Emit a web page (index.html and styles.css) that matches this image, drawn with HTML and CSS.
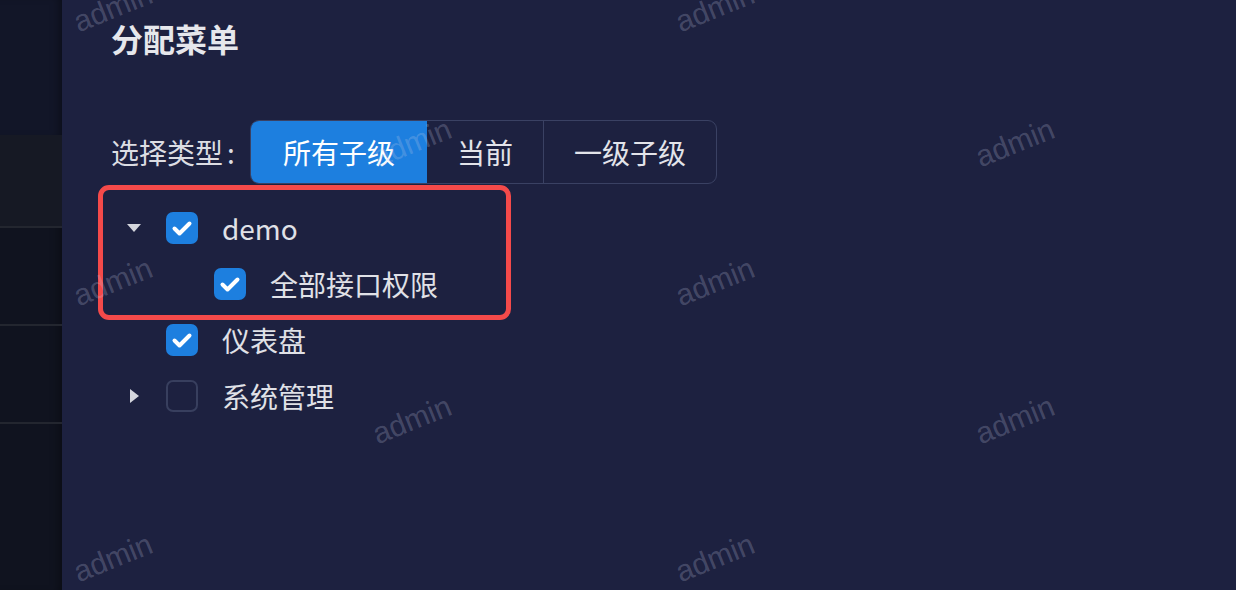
FILE: index.html
```html
<!DOCTYPE html>
<html lang="zh-CN">
<head>
<meta charset="utf-8">
<title>分配菜单</title>
<link rel="stylesheet" href="styles.css">
</head>
<body>
<div class="app">
  <aside class="sidebar">
    <div class="side-top"></div>
    <div class="side-item side-item-active"></div>
    <div class="side-item"></div>
    <div class="side-item"></div>
    <div class="side-rest"></div>
  </aside>
  <main class="panel">
    <h2 class="title">分配菜单</h2>
    <div class="type-row">
      <span class="type-label">选择类型<span class="colon">:</span></span>
      <div class="seg">
        <button class="seg-btn seg-btn-active">所有子级</button>
        <button class="seg-btn">当前</button>
        <button class="seg-btn">一级子级</button>
      </div>
    </div>
    <div class="tree">
      <div class="tree-row">
        <span class="caret"><svg width="14" height="8" viewBox="0 0 14 8"><polygon points="0,0 14,0 7,8" fill="#d4d6dd"/></svg></span>
        <span class="checkbox checked"><svg width="32" height="32" viewBox="0 0 32 32"><path d="M8.5 16.5l5 5L23.5 11.5" fill="none" stroke="#fff" stroke-width="4" stroke-linecap="round" stroke-linejoin="round"/></svg></span>
        <span class="node-label">demo</span>
      </div>
      <div class="tree-row level-1">
        <span class="caret"></span>
        <span class="checkbox checked"><svg width="32" height="32" viewBox="0 0 32 32"><path d="M8.5 16.5l5 5L23.5 11.5" fill="none" stroke="#fff" stroke-width="4" stroke-linecap="round" stroke-linejoin="round"/></svg></span>
        <span class="node-label">全部接口权限</span>
      </div>
      <div class="tree-row">
        <span class="caret"></span>
        <span class="checkbox checked"><svg width="32" height="32" viewBox="0 0 32 32"><path d="M8.5 16.5l5 5L23.5 11.5" fill="none" stroke="#fff" stroke-width="4" stroke-linecap="round" stroke-linejoin="round"/></svg></span>
        <span class="node-label">仪表盘</span>
      </div>
      <div class="tree-row">
        <span class="caret"><svg width="9" height="14" viewBox="0 0 9 14"><polygon points="0,0 9,7 0,14" fill="#d4d6dd"/></svg></span>
        <span class="checkbox"></span>
        <span class="node-label">系统管理</span>
      </div>
      <div class="highlight"></div>
    </div>
    <div class="watermarks">
      <span class="wm wm-1">admin</span>
      <span class="wm wm-2">admin</span>
      <span class="wm wm-3">admin</span>
      <span class="wm wm-4">admin</span>
      <span class="wm wm-5">admin</span>
      <span class="wm wm-6">admin</span>
      <span class="wm wm-7">admin</span>
      <span class="wm wm-8">admin</span>
      <span class="wm wm-9">admin</span>
      <span class="wm wm-10">admin</span>
    </div>
  </main>
</div>
</body>
</html>
```

FILE: styles.css
```css
* { box-sizing: border-box; }

html, body {
  margin: 0;
  padding: 0;
  height: 100%;
  background: #1d2140;
}

body {
  font-family: "Noto Sans CJK SC", "Noto Sans", sans-serif;
  color: #e3e4ea;
  overflow: hidden;
}

.app {
  display: flex;
  height: 590px;
}

.sidebar {
  width: 62px;
  flex: none;
  display: flex;
  flex-direction: column;
  background: #10131f;
  box-shadow: inset -8px 0 8px -5px rgba(0, 0, 0, 0.35);
}

.side-top {
  height: 135px;
  background: #121628;
  box-shadow: inset -8px 0 8px -5px rgba(0, 0, 0, 0.35);
}

.side-item {
  height: 98px;
  border-bottom: 2px solid #23262f;
}

.side-item-active {
  height: 93px;
  background: #161924;
}

.side-rest {
  flex: 1;
}

.panel {
  position: relative;
  flex: 1;
  padding-left: 49px;
  background: #1d2140;
}

.title {
  margin: 22px 0 0;
  height: 32px;
  font-size: 32px;
  line-height: 32px;
  font-weight: 700;
  color: #e6e7ec;
}

.type-row {
  margin-top: 66px;
  display: flex;
  align-items: center;
  height: 64px;
}

.type-label {
  font-size: 28px;
  line-height: 1;
  color: #dcdde3;
  width: 139px;
  flex: none;
  white-space: nowrap;
}

.colon {
  margin-left: 4px;
}

.seg {
  display: flex;
  height: 64px;
  border: 1.5px solid #3a4163;
  border-radius: 9px;
  overflow: hidden;
}

.seg-btn {
  font-family: inherit;
  font-size: 28px;
  line-height: 1;
  color: #e3e4ea;
  background: transparent;
  border: 0;
  padding: 0 30px;
  margin: 0;
  height: 100%;
}

.seg-btn + .seg-btn {
  border-left: 1.5px solid #3a4163;
}

.seg-btn-active {
  background: #1d7fdf;
  color: #fff;
  padding: 0 32px;
}

.seg-btn-active + .seg-btn {
  border-left: 0;
}

.tree {
  position: relative;
  margin-top: 16px;
}

.tree-row {
  display: flex;
  align-items: center;
  height: 56px;
}

.tree-row.level-1 {
  padding-left: 48px;
}

.caret {
  width: 46px;
  flex: none;
  display: flex;
  justify-content: center;
  align-items: center;
}

.caret svg { display: block; }

.checkbox {
  width: 32px;
  height: 32px;
  flex: none;
  margin-left: 9px;
  border-radius: 7px;
  border: 2px solid #383f5e;
}

.checkbox.checked {
  background: #1d7fdf;
  border: 0;
}

.checkbox svg { display: block; }

.node-label {
  margin-left: 24px;
  font-size: 28px;
  line-height: 1;
  color: #e0e1e7;
}

.highlight {
  position: absolute;
  left: -13px;
  top: -15px;
  width: 413px;
  height: 135px;
  border: 5px solid #f44a4a;
  border-radius: 11px;
  pointer-events: none;
}

.watermarks {
  position: absolute;
  inset: 0;
  pointer-events: none;
  overflow: hidden;
}

.wm {
  position: absolute;
  font-family: "Liberation Sans", Arial, sans-serif;
  font-size: 30px;
  line-height: 1;
  color: rgba(200, 205, 230, 0.24);
  transform: translate(-50%, -50%) rotate(-22deg);
  white-space: nowrap;
}

.wm-1 { left: 51px; top: 8px; }
.wm-2 { left: 653px; top: 8px; }
.wm-3 { left: 350px; top: 143px; }
.wm-4 { left: 953px; top: 143px; }
.wm-5 { left: 51px; top: 282px; }
.wm-6 { left: 653px; top: 282px; }
.wm-7 { left: 350px; top: 420px; }
.wm-8 { left: 953px; top: 420px; }
.wm-9 { left: 51px; top: 558px; }
.wm-10 { left: 653px; top: 558px; }
```
